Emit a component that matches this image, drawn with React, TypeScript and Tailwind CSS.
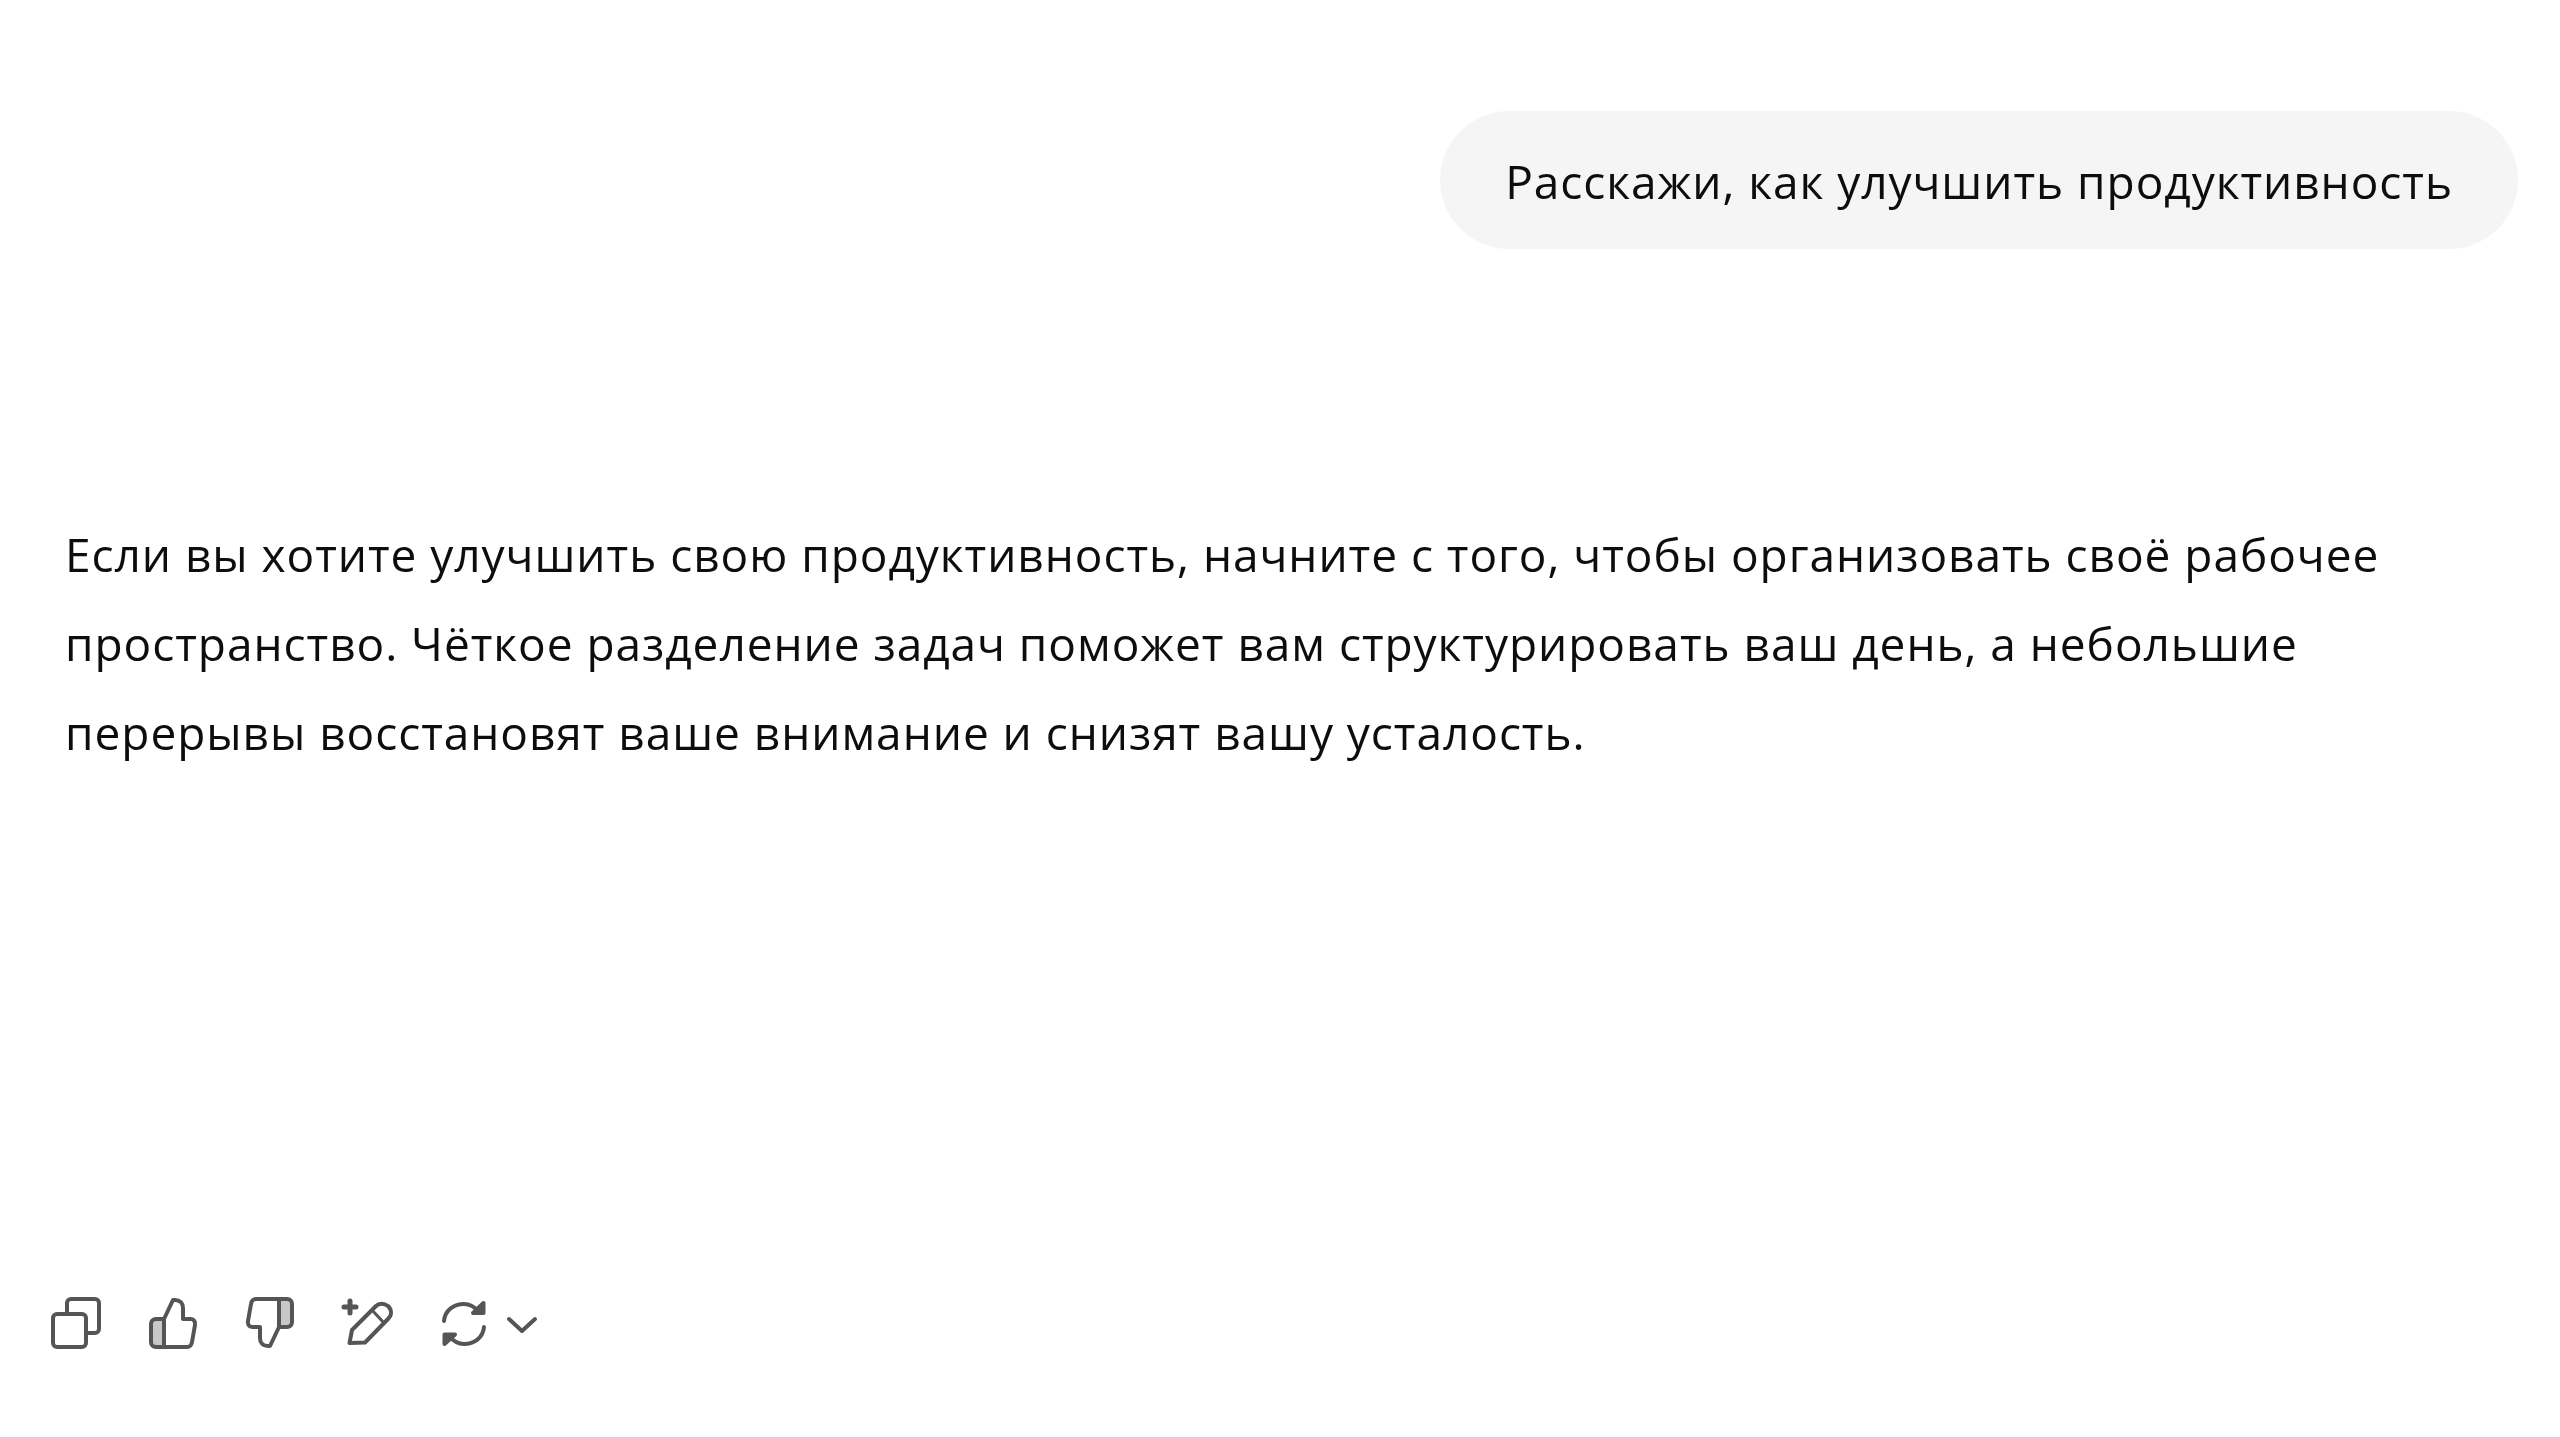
import type { ReactNode } from "react"

const answerLines = [
  "Если вы хотите улучшить свою продуктивность, начните с того, чтобы организовать своё рабочее",
  "пространство. Чёткое разделение задач поможет вам структурировать ваш день, а небольшие",
  "перерывы восстановят ваше внимание и снизят вашу усталость.",
]

function Icon({ children }: { children: ReactNode }) {
  return (
    <svg viewBox="0 0 60 60" fill="none" stroke="#555555" strokeWidth="4" strokeLinejoin="round" strokeLinecap="round" className="w-[60px] h-[60px] shrink-0">
      {children}
    </svg>
  )
}

function Thumb() {
  return (
    <>
      <rect x="10" y="28" width="10" height="25" fill="#c8c8c8" stroke="none" />
      <path d="M21 26 30 7h2c5 0 8 3 8 8v11h8c3 0 4.500 3 4 6l-3 17c-.5 3-2.500 5-5 5H13c-3 0-5-2-5-5V31c0-3 2-5 5-5h8v28" />
    </>
  )
}

export default function App() {
  return (
    <div className="w-full h-[1437px] bg-white text-[#0d0d0d] font-['Open_Sans',sans-serif] font-[450] text-[46px] tracking-[0.96px] flex flex-col overflow-hidden blur-[0.5px]">
      {/* User message */}
      <div className="flex justify-end pt-[111px] pr-[42px]">
        <div className="h-[138px] pt-[2px] px-[65px] rounded-[69px] bg-[#f5f5f5] flex items-center whitespace-nowrap">
          Расскажи, как улучшить продуктивность
        </div>
      </div>

      {/* Assistant answer */}
      <div className="mt-[261px] pl-[65px] leading-[89px] whitespace-nowrap">
        {answerLines.map((line) => (
          <div key={line}>{line}</div>
        ))}
      </div>

      {/* Actions */}
      <div className="mt-[516px] pl-[46px] flex items-center gap-[37px]">
        <Icon>
          <rect x="7" y="21" width="33" height="33" rx="4" />
          <path d="M21 21V10a4 4 0 0 1 4-4h24a4 4 0 0 1 4 4v26a4 4 0 0 1-4 4h-9" />
        </Icon>
        <Icon>
          <Thumb />
        </Icon>
        <Icon>
          <g transform="rotate(180 30 30)">
            <Thumb />
          </g>
        </Icon>
        <Icon>
          <path d="M12.500 50 15 37 39 13c3-3 8-3 12 0 4 4 4 9 0 13L28 49.500Z" />
          <path d="M35 17 47 30" strokeWidth="3" />
          <path d="M13 8v12M7 14h12" strokeWidth="5" />
        </Icon>
        <div className="flex items-center gap-[10px]">
          <Icon>
            <path d="M10 28c1-11 10-17 20-17 6 0 10 2 15 8" />
            <path d="M49.500 10v10H39Z" fill="#555555" />
            <path d="M50 34c-1 11-10 17-20 17-6 0-10-2-15-8" />
            <path d="M10.500 51V41.500H21Z" fill="#555555" />
          </Icon>
          <svg viewBox="0 0 36 36" fill="none" stroke="#555555" strokeWidth="4" strokeLinecap="round" strokeLinejoin="round" className="w-[36px] h-[36px] shrink-0">
            <path d="M5 14 18 26 31 14" />
          </svg>
        </div>
      </div>
    </div>
  )
}
